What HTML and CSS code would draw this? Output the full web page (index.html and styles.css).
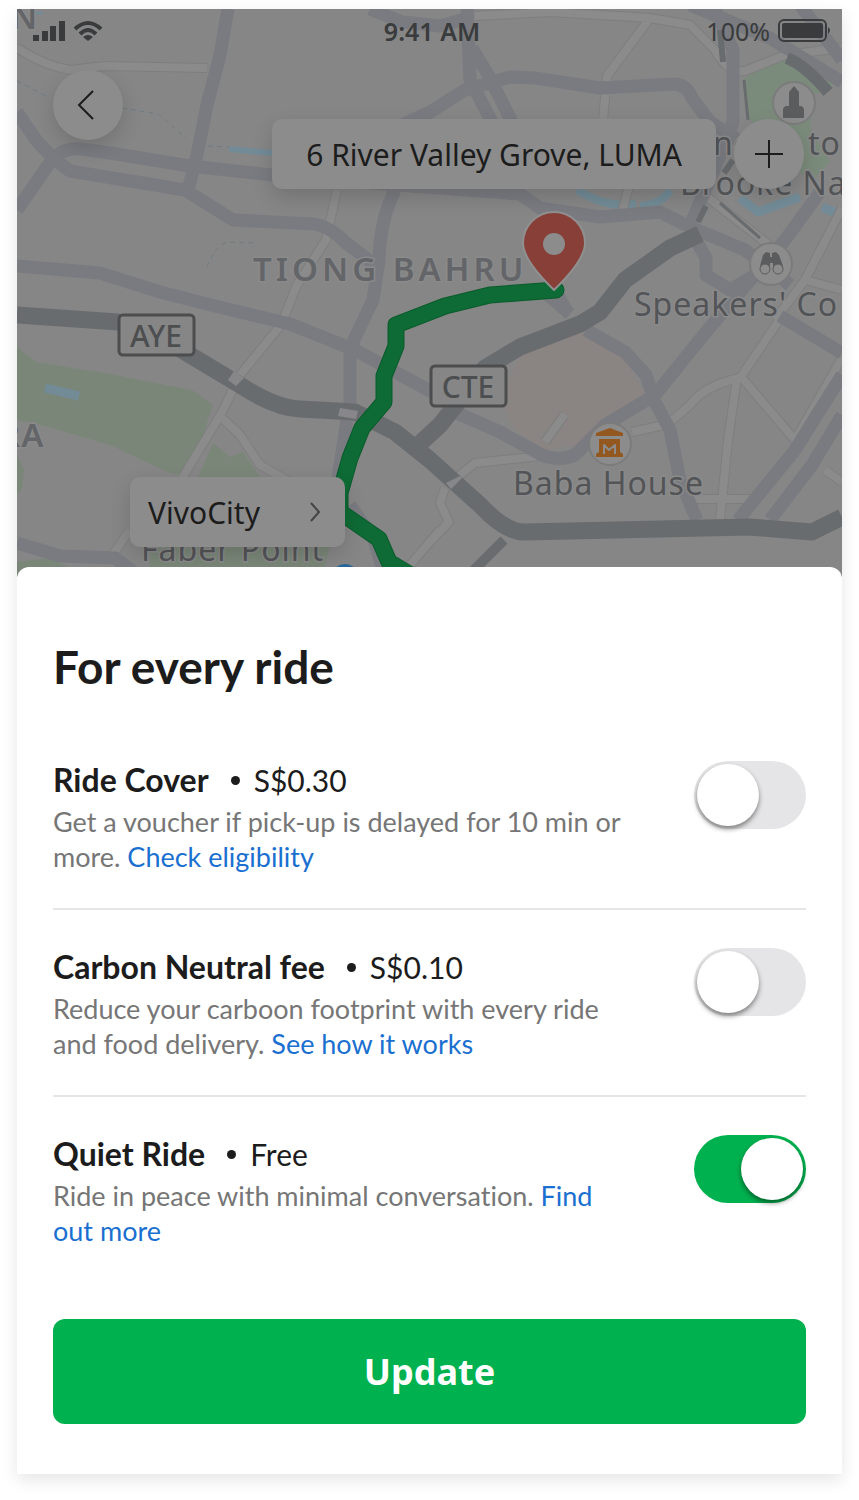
FILE: index.html
```
<!DOCTYPE html>
<html lang="en">
<head>
    <meta charset="UTF-8">
    <title>For every ride</title>
    <meta name="viewport" content="width=device-width, initial-scale=1.0">
    <link rel="stylesheet" href="styles.css">
</head>
<body>
    <main class="phone">
        <section class="map-area">
            <svg class="map" viewBox="17 9 825 568" preserveAspectRatio="xMidYMin slice" aria-hidden="true">
                <!-- parks and blocks -->
                <g class="park">
                    <path d="M17 347 L36 362 L110 374 L192 390 L213 405 L190 474 L172 474 L110 445 L45 426 L17 420Z"/>
                    <path d="M213 443 L230 457 L243 452 L260 477 L198 477Z"/>
                    <path d="M17 455 L24 470 L22 488 L17 494Z"/>
                    <path d="M17 562 L50 558 L70 568 L17 577Z"/>
                    <path d="M150 545 L330 545 L322 577 L150 577Z"/>
                </g>
                <path class="park-light" d="M743 80 L765 65 L790 58 L826 64 L838 82 L812 96 L810 128 L830 162 L815 178 L790 170 L757 125 L747 118Z"/>
                <path class="block-pink" d="M520 356 L580 330 L622 354 L645 395 L615 420 L575 445 L545 450 L515 430 L500 400Z"/>
                <g class="water-line">
                    <path d="M229 149 L272 153" stroke-width="6"/>
                    <path d="M577 190 Q610 210 636 203 M640 206 Q662 204 670 190" stroke-width="8"/>
                    <path d="M740 198 L758 212 L800 197 M822 207 L836 213" stroke-width="9"/>
                    <path d="M45 388 L79 396" stroke-width="9"/>
                    <path d="M36 13 L43 13" stroke-width="3"/>
                </g>
                <g class="trail">
                    <path d="M17 81 L48 97 M122 108 L158 114 L186 138 M208 146 L229 147 M207 267 Q216 245 228 242 L258 243"/>
                </g>
                <!-- small streets: outline first, then fill -->
                <g class="street-edge">
                    <path id="streets" d="M17 48 Q45 66 70 70 L105 66 L207 68 M337 190 L326 240 L297 285 L281 325 L240 375 L222 412 L180 482 M222 418 L240 435 L260 465 L290 482 M130 530 L112 556 M475 16 L550 12 L650 18 L630 45 L607 76 L603 120 M650 18 L690 25 L715 50 Q728 74 745 71 L785 55 L842 48 M629 186 L622 212 M778 322 L740 378 Q705 385 690 405 L668 424 L632 432 M737 378 L728 440 L720 520 M742 378 L795 440 L842 358 M695 499 L755 499 M565 414 L545 442 M540 456 L475 463 L450 483 M445 488 L440 503 L449 522 L428 544 M706 196 L760 238 L790 262 M842 208 L805 280 L842 290 M805 280 L775 320 M410 565 L440 530 M825 470 L842 482"/>
                </g>
                <use href="#streets" class="street-fill"/>
                <!-- main roads -->
                <g class="road">
                    <path d="M228 9 L220 55 L207 105 L197 155 L188 190"/>
                    <path d="M17 112 L36 140 L53 158 L17 210 M53 158 Q66 147 80 149 L110 153 L190 166 L290 177 L520 194 L540 208 L600 217 L660 212 L690 227 L745 250 L790 285"/>
                    <path d="M53 158 L70 171 L185 190 L233 220 L315 224 Q332 228 345 242 L375 265"/>
                    <path d="M395 190 Q380 220 379 260 L373 300 L350 348 L350 402 L336 490"/>
                    <path d="M17 266 L100 273 L160 292 L215 306 L290 324 L355 350 L432 392"/>
                    <path d="M370 9 L402 22 L440 26 L468 18 M467 9 L470 80 L492 122 M472 48 L490 78 L512 122 M380 135 L430 112 L465 90 L510 77 L535 78 L600 88 L675 84 Q688 86 692 98 L710 122 L738 140"/>
                    <path d="M690 5 L770 38 L842 82 M800 5 L842 60 M715 9 L733 50 L733 122 L712 175 L690 225"/>
                    <path d="M820 192 L785 240 L740 292 L706 332 L655 395 L605 425 L575 455 Q560 462 542 455 L500 432 L455 412"/>
                    <path d="M586 330 L625 352 L646 375 L654 400 L670 430 L680 480 L697 520"/>
                    <path d="M690 230 L706 258 L706 275 L730 290 L755 275 M780 316 L842 353"/>
                    <path d="M842 375 L795 450 L738 520 M842 415 L812 465 L770 520"/>
                    <path d="M17 543 L60 556 L115 558 L140 577 M545 292 L570 314 M555 290 L566 310"/>
                    <path d="M350 505 L374 540 L385 577"/>
                </g>
                <g class="highway">
                    <path d="M17 315 L118 322 L155 334 L190 355 L240 385 Q275 408 300 409 L355 412 L395 432 L430 460 L480 505 Q505 532 525 532 L750 527 L812 532 L842 517"/>
                    <path d="M700 234 L670 248 L625 280 L600 312 L580 324 L520 347 L485 368 L440 425 L415 448"/>
                    <path d="M504 540 L467 577" stroke-width="10"/>
                    <path d="M787 58 Q805 65 828 92" stroke-width="12"/>
                    <path d="M720 30 L723 62 M733 160 L724 173 M706 206 L698 222" stroke-width="6"/>
                    <path d="M744 80 L748 120 M720 203 L760 238" stroke-width="3"/>
                </g>
                <path class="bridge" d="M340 408 L358 411 L356 419 L338 416Z M234 371 L244 378 L236 386 L228 380Z M446 483 L460 476 L462 478 L451 489Z"/>

                <!-- place names -->
                <g class="place">
                    <text x="11" y="29" class="area">N</text>
                    <text x="-1" y="447" class="area">RA</text>
                    <text x="253" y="281" class="area district">TIONG BAHRU</text>
                    <text x="634" y="316">Speakers' Co</text>
                    <text x="513" y="495">Baba House</text>
                    <text x="680" y="195">Brooke Na</text>
                    <text x="713" y="155">no</text>
                    <text x="808" y="155">to</text>
                    <text x="141" y="561">Faber Point</text>
                </g>
                <g class="shield">
                    <rect x="119" y="315" width="75" height="40" rx="4"/>
                    <text x="156" y="347">AYE</text>
                    <rect x="431" y="366" width="75" height="40" rx="4"/>
                    <text x="468" y="398">CTE</text>
                </g>

                <!-- points of interest -->
                <g class="poi">
                    <circle cx="794" cy="103" r="21"/>
                    <path d="M789 106 V92 L794 86 L799 92 V106 H801 Q804 107 804 110 V118 H783 V110 Q783 107 786 106Z"/>
                    <circle cx="771" cy="264" r="21"/>
                    <path d="M760 266 L763 255 L766 252 L770 253 V257 H772 V253 L776 252 L779 255 L783 266 V269 H773 V263 H770 V269 H760Z"/>
                    <path class="lens" d="M760 269 a5 5 0 1 0 10 0 a5 5 0 1 0 -10 0 M773 269 a5 5 0 1 0 10 0 a5 5 0 1 0 -10 0"/>
                    <circle cx="610" cy="444" r="21"/>
                    <path class="museum" d="M596 433 L610 428 L623 433 V436 H596Z M599 439 H620 V452 L623 454 V457 H596 V454 L599 452Z"/>
                    <path class="museum-mark" d="M604 454 V445 L609 450 L615 445 V454"/>
                </g>
                <circle class="stop" cx="345" cy="577" r="13"/>

                <!-- route -->
                <path class="route-edge" d="M556 290 L490 295 L445 306 L396 325 L396 346 L384 376 L384 402 L362 428 L350 458 L340 493 L340 512 L379 539 L389 562 L414 577"/>
                <path class="route" d="M556 290 L490 295 L445 306 L396 325 L396 346 L384 376 L384 402 L362 428 L350 458 L340 493 L340 512 L379 539 L389 562 L414 577"/>
                <path class="pin" d="M554 290 Q523 260 523 243 A31 31 0 0 1 585 243 Q585 260 554 290Z"/>
                <circle class="pin-hole" cx="554" cy="244" r="11"/>
            </svg>

            <div class="status-bar">
                <div class="status-left">
                    <svg width="72" height="24" viewBox="0 0 72 24" aria-hidden="true">
                        <path d="M1 16h6v6h-6z M10 12h6v10h-6z M18 7h6v15h-6z M27 2h6v20h-6z"/>
                        <path d="M43 10 Q56 -2 69 10 M48 15 Q56 7 64 15" fill="none" stroke="#393b3c" stroke-width="4"/>
                        <path d="M51 18 Q56 14 61 18 L56 22Z"/>
                    </svg>
                </div>
                <div class="status-time">9:41 AM</div>
                <div class="status-right">
                    <span>100%</span>
                    <svg width="54" height="24" viewBox="0 0 54 24" aria-hidden="true">
                        <rect x="1" y="1" width="47" height="21" rx="5" fill="none" stroke="#393b3c" stroke-width="2"/>
                        <rect x="4" y="4" width="41" height="15" rx="2"/>
                        <path d="M50 8 Q54 11 50 15Z"/>
                    </svg>
                </div>
            </div>

            <button class="round-btn back-btn" aria-label="Back">
                <svg width="70" height="70" viewBox="0 0 70 70"><path d="M40 21 L26 35 L40 49"/></svg>
            </button>
            <button class="place-btn dropoff">6 River Valley Grove, LUMA</button>
            <button class="round-btn add-btn" aria-label="Add stop">
                <svg width="70" height="70" viewBox="0 0 70 70"><path d="M35 21 V49 M21 35 H49"/></svg>
            </button>
            <button class="place-btn pickup">
                VivoCity
                <svg width="12" height="20" viewBox="0 0 12 20" aria-hidden="true"><path d="M2 1 L10 10 L2 19"/></svg>
            </button>
        </section>

        <section class="sheet">
            <h1>For every ride</h1>
            <div class="option">
                <div class="option-text">
                    <div class="option-head">
                        <label for="ride-cover">Ride Cover</label>
                        <span class="price">S$0.30</span>
                    </div>
                    <p>Get a voucher if pick-up is delayed for 10 min or more. <a href="#">Check eligibility</a></p>
                </div>
                <input type="checkbox" class="toggle" id="ride-cover">
            </div>
            <div class="option">
                <div class="option-text">
                    <div class="option-head">
                        <label for="carbon-fee">Carbon Neutral fee</label>
                        <span class="price">S$0.10</span>
                    </div>
                    <p>Reduce your carboon footprint with every ride and food delivery. <a href="#">See how it works</a></p>
                </div>
                <input type="checkbox" class="toggle" id="carbon-fee">
            </div>
            <div class="option">
                <div class="option-text">
                    <div class="option-head">
                        <label for="quiet-ride">Quiet Ride</label>
                        <span class="price">Free</span>
                    </div>
                    <p>Ride in peace with minimal conversation. <a href="#">Find out more</a></p>
                </div>
                <input type="checkbox" class="toggle" id="quiet-ride" checked>
            </div>
            <button class="update-btn">Update</button>
        </section>
    </main>
</body>
</html>
```

FILE: styles.css
```
* {
    box-sizing: border-box;
}
body {
    margin: 0;
    padding: 9px 17px 27px;
    background: #fff;
    color: #1c1c1c;
    font-family: Lato, "Noto Sans", sans-serif;
}
button {
    border: none;
    padding: 0;
    font-family: inherit;
    cursor: pointer;
}
.phone {
    background: #fff;
    box-shadow: 0 6px 16px rgba(0, 0, 0, 0.1);
}

/* Map */
.map-area {
    position: relative;
    height: 568px;
    overflow: hidden;
    background: #868686;
    font-family: "Noto Sans", sans-serif;
}
.map {
    position: absolute;
    top: 0;
    left: 0;
    width: 100%;
    height: 100%;
}
.map path {
    stroke-linejoin: round;
}
.park { fill: #7a8778; }
.park-light { fill: #7b8b7b; }
.block-pink { fill: #8a8482; }
.water-line {
    fill: none;
    stroke: #728b96;
}
.trail {
    fill: none;
    stroke: #6f7b83;
    stroke-width: 1;
    stroke-dasharray: 5 4;
}
.street-edge {
    fill: none;
    stroke: #7e7e7e;
    stroke-width: 10;
}
.street-fill {
    fill: none;
    stroke: #8b8b8b;
    stroke-width: 8;
}
.road {
    fill: none;
    stroke: #7a7b80;
    stroke-width: 13;
}
.highway {
    fill: none;
    stroke: #696c6f;
    stroke-width: 17;
}
.bridge { fill: #87878a; }
.place {
    fill: #525457;
    stroke: #8a8a8a;
    stroke-width: 3px;
    paint-order: stroke;
    font-size: 32px;
    letter-spacing: 1px;
}
.place .area {
    fill: #636569;
    font-size: 33px;
    font-weight: 600;
}
.place .district {
    letter-spacing: 4px;
}
.shield rect {
    fill: #868686;
    stroke: #4c4d4f;
    stroke-width: 3px;
}
.shield text {
    fill: #4c4e50;
    font-size: 30px;
    font-weight: 500;
    text-anchor: middle;
}
.poi circle {
    fill: #8c8c8c;
    stroke: #7b7b7b;
    stroke-width: 2px;
}
.poi path { fill: #5b5c5e; }
.poi .lens {
    fill: #8c8c8c;
    stroke: #5b5c5e;
    stroke-width: 1px;
}
.poi .museum { fill: #935820; }
.poi .museum-mark {
    fill: none;
    stroke: #8c8c8c;
    stroke-width: 2px;
}
.stop { fill: #2a679c; }
.route-edge, .route {
    fill: none;
    stroke: #0b5c2c;
    stroke-width: 17px;
    stroke-linecap: round;
}
.route {
    stroke: #0e6b35;
    stroke-width: 15px;
}
.pin {
    fill: #883f37;
    stroke: #909090;
    stroke-width: 2px;
}
.pin-hole { fill: #8c8c8c; }

/* Status bar */
.status-bar {
    position: relative;
    display: flex;
    align-items: center;
    height: 44px;
    padding: 0 10px 0 15px;
    color: #393b3c;
    fill: #393b3c;
    font-size: 25px;
}
.status-left, .status-right {
    flex: 1;
    display: flex;
    align-items: center;
}
.status-right {
    justify-content: flex-end;
    gap: 8px;
}
.status-time {
    font-weight: 600;
}

/* Buttons over the map */
.round-btn, .place-btn {
    position: absolute;
    height: 70px;
    background: #8c8c8c;
    box-shadow: 0 8px 20px rgba(0, 0, 0, 0.15);
}
.round-btn {
    width: 70px;
    border-radius: 50%;
}
.round-btn path, .place-btn path {
    fill: none;
    stroke: #1c1c1c;
    stroke-width: 2px;
}
.back-btn {
    top: 61px;
    left: 36px;
}
.add-btn {
    top: 110px;
    right: 38px;
}
.place-btn {
    border-radius: 10px;
    color: #1c1c1c;
    font-size: 30px;
}
.dropoff {
    top: 110px;
    right: 126px;
    padding: 0 34px;
}
.pickup {
    top: 468px;
    left: 113px;
    display: flex;
    align-items: center;
    justify-content: space-between;
    width: 215px;
    padding: 0 24px 0 18px;
}
.pickup path {
    stroke: #444;
}

/* Bottom sheet */
.sheet {
    position: relative;
    margin-top: -10px;
    padding: 72px 36px 50px;
    background: #fff;
    border-radius: 12px 12px 0 0;
}
.sheet h1 {
    margin: 0 0 28px;
    font-size: 46px;
    line-height: 56px;
}
.option {
    display: flex;
    justify-content: space-between;
    align-items: flex-start;
    padding: 38px 0 34px;
    border-bottom: 2px solid #e6e6e6;
}
.option:last-of-type {
    border-bottom: none;
}
.option-text {
    max-width: 576px;
}
.option-head {
    display: flex;
    align-items: center;
    margin-bottom: 5px;
    font-size: 32px;
    line-height: 38px;
}
.option-head label {
    font-weight: bold;
}
.price {
    display: flex;
    align-items: center;
    font-size: 30px;
}
.price::before {
    content: "";
    width: 9px;
    height: 9px;
    margin: 0 14px 0 22px;
    border-radius: 50%;
    background: #1c1c1c;
}
.option p {
    margin: 0;
    color: #767676;
    font-size: 27px;
    line-height: 35px;
    font-variant-ligatures: none;
}
.option a {
    color: #1a70d0;
    text-decoration: none;
}
.toggle {
    appearance: none;
    flex: none;
    width: 112px;
    height: 68px;
    margin: 0;
    border-radius: 34px;
    background: #e5e5e7;
    cursor: pointer;
}
.toggle::before {
    content: "";
    display: block;
    width: 62px;
    height: 62px;
    margin: 3px;
    border-radius: 50%;
    background: #fff;
    box-shadow: 0 3px 5px rgba(0, 0, 0, 0.45);
}
.toggle:checked {
    background: #00b14f;
}
.toggle:checked::before {
    margin-left: 47px;
}
.update-btn {
    display: block;
    width: 100%;
    height: 105px;
    margin-top: 37px;
    border-radius: 12px;
    background: #00b14f;
    color: #fff;
    font-family: "Noto Sans", sans-serif;
    font-size: 36px;
    font-weight: bold;
}
```
